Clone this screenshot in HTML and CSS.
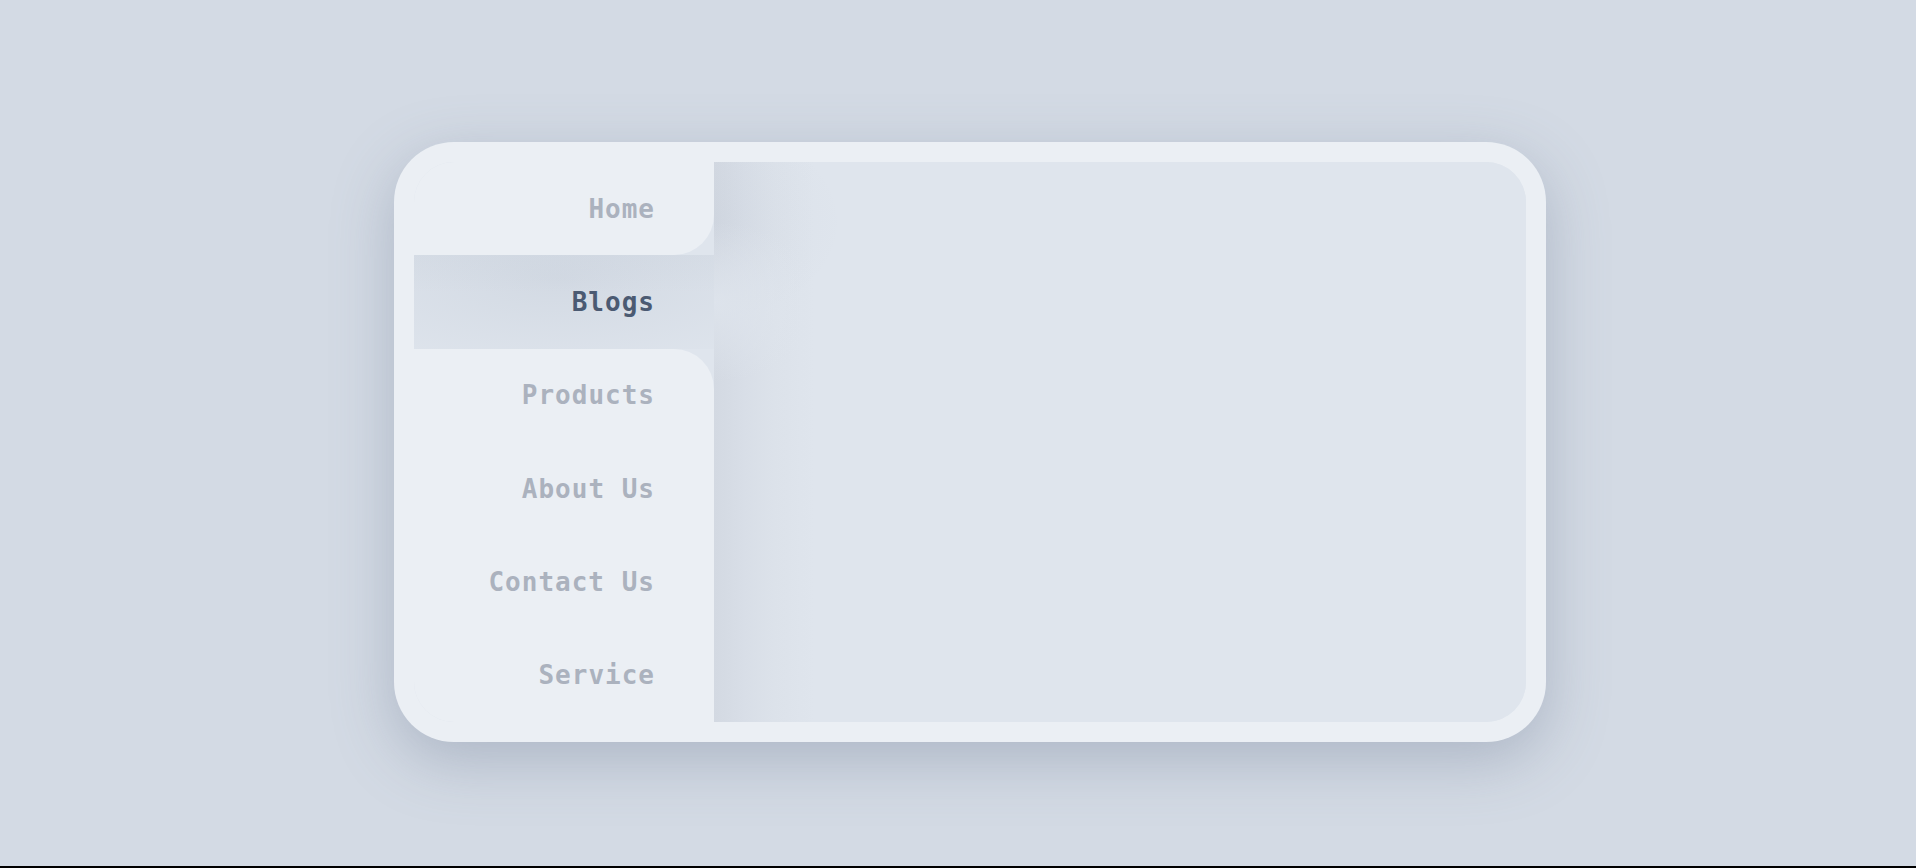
FILE: index.html
```html
<!DOCTYPE html>
<html lang="en">
<head>
<meta charset="utf-8">
<title>Tabs</title>
<link rel="stylesheet" href="styles.css">
</head>
<body>
  <div class="card">
    <div class="panel">
      <nav class="nav">
        <a class="item before-active" href="#">Home</a>
        <a class="item active" href="#">Blogs</a>
        <a class="item after-active" href="#">Products</a>
        <a class="item" href="#">About Us</a>
        <a class="item" href="#">Contact Us</a>
        <a class="item" href="#">Service</a>
      </nav>
      <section class="content"></section>
    </div>
  </div>
</body>
</html>
```

FILE: styles.css
```css
html {
  background: #000;
}
body {
  margin: 0;
  height: calc(100vh - 2px);
  background: #d3dae4;
  display: flex;
  align-items: center;
  justify-content: center;
  padding: 18px 0 0 24px;
  box-sizing: border-box;
  font-family: "DejaVu Sans Mono", "Liberation Mono", monospace;
}
.card {
  width: 1152px;
  height: 600px;
  box-sizing: border-box;
  padding: 20px;
  border-radius: 60px;
  background: #ebeff4;
  box-shadow: 0 18px 60px rgba(110, 124, 148, 0.38);
}
.panel {
  height: 100%;
  display: flex;
  border-radius: 40px;
  overflow: hidden;
  background: #dfe5ed;
}
.nav {
  width: 300px;
  flex: none;
  display: flex;
  flex-direction: column;
}
.item {
  flex: 1;
  display: flex;
  align-items: center;
  justify-content: flex-end;
  padding-right: 59px;
  background: #ebeff4;
  color: #abb2be;
  font-size: 26px;
  font-weight: bold;
  letter-spacing: 1px;
  text-decoration: none;
}
.item.active {
  background:
    radial-gradient(ellipse 260px 95px at 48% 25%, rgba(100, 116, 140, 0.1), rgba(100, 116, 140, 0.05) 55%, rgba(100, 116, 140, 0.01) 100%),
    linear-gradient(to bottom, rgba(100, 116, 140, 0.04), rgba(100, 116, 140, 0) 40%);
  color: #4b5a72;
}
.item.before-active {
  border-bottom-right-radius: 40px;
}
.item.after-active {
  border-top-right-radius: 40px;
}
.content {
  flex: 1;
  background:
    radial-gradient(ellipse 110px 80px at 0 140px, rgba(223, 229, 237, 0.85) 0%, rgba(223, 229, 237, 0.5) 45%, rgba(223, 229, 237, 0) 100%),
    radial-gradient(ellipse 130px 100px at 0 60px, rgba(100, 116, 140, 0.04), rgba(100, 116, 140, 0) 100%),
    linear-gradient(to right, #d3d9e2 0, #d8dee7 30px, #dce2ea 60px, #dfe5ed 100px);
}
```
